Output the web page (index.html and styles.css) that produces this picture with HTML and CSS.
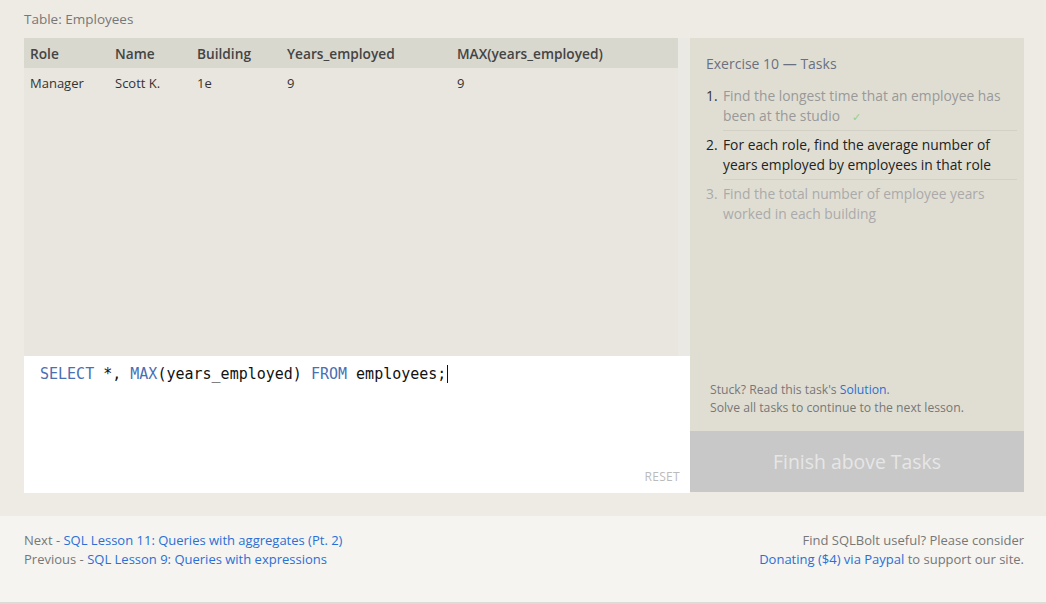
FILE: index.html
```html
<!DOCTYPE html>
<html>
<head>
<meta charset="utf-8">
<link rel="stylesheet" href="styles.css">
</head>
<body>
<div class="page">
  <div class="table-title">Table: Employees</div>
  <div class="workspace">
    <div class="left">
      <div class="results">
        <div class="results-table">
          <table>
            <thead>
              <tr><th class="c1">Role</th><th class="c2">Name</th><th class="c3">Building</th><th class="c4">Years_employed</th><th>MAX(years_employed)</th></tr>
            </thead>
            <tbody>
              <tr><td>Manager</td><td>Scott K.</td><td>1e</td><td>9</td><td>9</td></tr>
            </tbody>
          </table>
        </div>
        <div class="scroll-strip"></div>
      </div>
      <div class="editor">
        <div class="code"><span class="kw">SELECT</span> *, <span class="kw">MAX</span>(years_employed) <span class="kw">FROM</span> employees;<span class="caret"></span></div>
        <div class="reset">RESET</div>
      </div>
    </div>
    <div class="right">
      <div class="tasks">
        <div class="tasks-title">Exercise 10 — Tasks</div>
        <ol class="task-list">
          <li class="task done"><span class="num">1.</span><span class="txt">Find the longest time that an employee has been at the studio<span class="check">✓</span></span></li>
          <li class="task active"><span class="num">2.</span><span class="txt">For each role, find the average number of years employed by employees in that role</span></li>
          <li class="task todo"><span class="num">3.</span><span class="txt">Find the total number of employee years worked in each building</span></li>
        </ol>
        <div class="help">
          <div>Stuck? Read this task's <a href="#">Solution</a>.</div>
          <div>Solve all tasks to continue to the next lesson.</div>
        </div>
      </div>
      <div class="finish">Finish above Tasks</div>
    </div>
  </div>
</div>
<div class="footer">
  <div class="nav">
    <div>Next - <a href="#">SQL Lesson 11: Queries with aggregates (Pt. 2)</a></div>
    <div>Previous - <a href="#">SQL Lesson 9: Queries with expressions</a></div>
  </div>
  <div class="donate">
    <div>Find SQLBolt useful? Please consider</div>
    <div><a href="#">Donating ($4) via Paypal</a> to support our site.</div>
  </div>
</div>
</body>
</html>
```

FILE: styles.css
```css
html, body {
  margin: 0;
  padding: 0;
}
body {
  background: #eeebe4;
  font-family: "Open Sans", "DejaVu Sans", sans-serif;
  color: #333;
  width: 1046px;
  height: 604px;
  overflow: hidden;
}
a {
  color: #2a6fd6;
  text-decoration: none;
}
.page {
  padding: 0 22px 23px 24px;
  background: #eeebe4;
}
.table-title {
  height: 38px;
  line-height: 38px;
  font-size: 13.5px;
  color: #777;
}
.workspace {
  display: flex;
  width: 1000px;
  height: 455px;
}
.left {
  width: 666px;
  display: flex;
  flex-direction: column;
}
.results {
  height: 318px;
  display: flex;
}
.results-table {
  flex: 1;
  background: #e8e6df;
}
.scroll-strip {
  width: 12px;
  background: #ebe9e3;
}
table {
  border-collapse: collapse;
  width: 100%;
  font-size: 13px;
}
th {
  background: #d9d8cf;
  text-align: left;
  font-weight: 600;
  font-size: 13.7px;
  color: #444;
  height: 30px;
  padding: 0 6px;
}
td {
  height: 30px;
  padding: 0 6px;
  color: #333;
}
.c1 { width: 73px; }
.c2 { width: 70px; }
.c3 { width: 78px; }
.c4 { width: 158px; }
.editor {
  flex: 1;
  background: #fff;
  display: flex;
  flex-direction: column;
  justify-content: space-between;
  padding: 8px 10px 8px 16px;
}
.code {
  font-family: "DejaVu Sans Mono", monospace;
  font-size: 15px;
  line-height: 20px;
  color: #111;
  display: flex;
  align-items: center;
  white-space: pre;
}
.kw {
  color: #4a6fb3;
}
.caret {
  display: inline-block;
  width: 1px;
  height: 18px;
  background: #111;
  margin-left: 1px;
}
.reset {
  align-self: flex-end;
  font-size: 12px;
  color: #bbb;
  letter-spacing: 0.3px;
}
.right {
  width: 334px;
  display: flex;
  flex-direction: column;
  padding-bottom: 1px;
}
.tasks {
  flex: 1;
  background: #e0ded3;
  padding: 16px 7px 14px 16px;
  display: flex;
  flex-direction: column;
}
.tasks-title {
  font-size: 14px;
  line-height: 20px;
  color: #6b7080;
  margin-bottom: 12px;
}
.task-list {
  list-style: none;
  margin: 0;
  padding: 0;
  flex: 1;
}
.task {
  display: flex;
  font-size: 13.8px;
  line-height: 20px;
}
.task .num {
  width: 17px;
  flex: none;
}
.task .txt {
  flex: 1;
  padding: 0 10px 4px 0;
  border-bottom: 1px solid #d3d0c5;
  margin-bottom: 4px;
}
.task:last-child .txt {
  border-bottom: none;
}
.done .num { color: #333; }
.done .txt { color: #999; }
.check {
  display: inline-block;
  color: #8fd08f;
  font-family: "DejaVu Sans", sans-serif;
  font-size: 11px;
  line-height: 12px;
  margin-left: 12px;
}
.active .num, .active .txt { color: #222; }
.todo .num, .todo .txt { color: #aaa; }
.help {
  font-size: 12.2px;
  line-height: 18px;
  color: #777;
  padding-left: 4px;
}
.finish {
  height: 61px;
  background: #c8c8c8;
  color: #e6e6e6;
  font-size: 19.4px;
  display: flex;
  align-items: center;
  justify-content: center;
}
.footer {
  background: #f5f4f0;
  height: 86px;
  border-bottom: 2px solid #dddbd6;
  padding: 0 22px 0 24px;
  display: flex;
  justify-content: space-between;
  align-items: flex-start;
  font-size: 13px;
  line-height: 19px;
  color: #777;
}
.nav, .donate {
  padding-top: 15px;
}
.donate {
  text-align: right;
}
```
